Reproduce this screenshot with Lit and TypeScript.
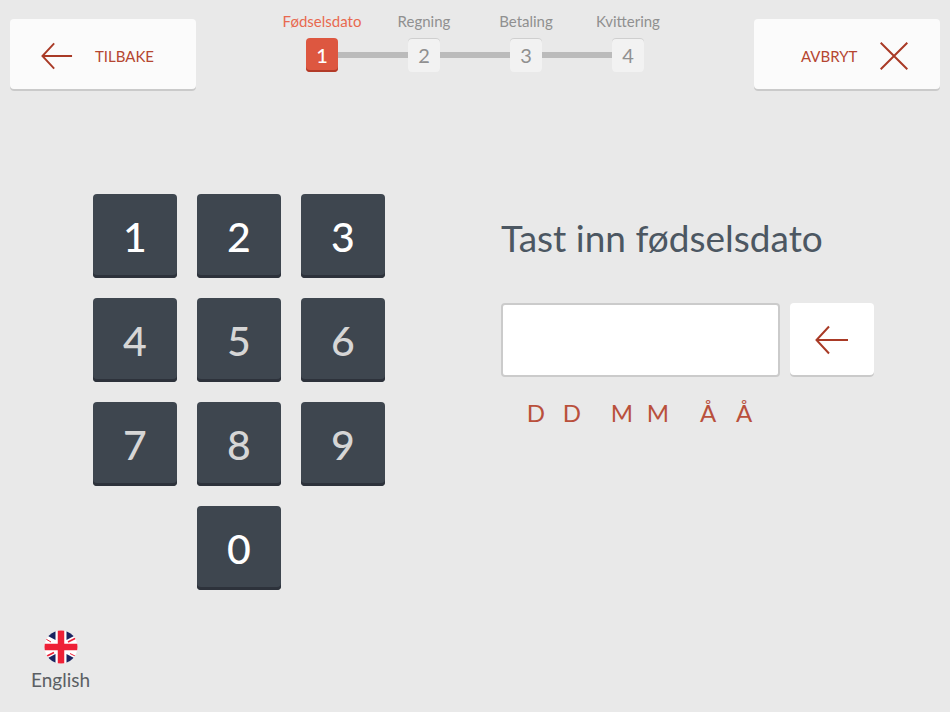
import { LitElement, html, svg, css } from "lit";
import { customElement, state } from "lit/decorators.js";
import { classMap } from "lit/directives/class-map.js";

const arrow = (size: number) => html`
  <svg class="icon" width=${size} height=${size} viewBox="0 0 34 34" aria-hidden="true">
    <path d="M33 17H1.500M14 3.500L1.500 17L14 30.500" />
  </svg>`;

const cross = html`
  <svg class="icon" width="28" height="28" viewBox="0 0 28 28" aria-hidden="true">
    <path d="M.7 .7L27.300 27.300M27.300 .7L.7 27.300" />
  </svg>`;

const flag = svg`
  <svg class="flag" width="34" height="34" viewBox="0 0 34 34" aria-hidden="true">
    <defs><clipPath id="disc"><circle cx="17" cy="17" r="16.500" /></clipPath></defs>
    <g clip-path="url(#disc)">
      <rect width="34" height="34" fill="#fff" />
      <g fill="#1b2460">
        <path d="M11.500 0V10L3 5.500V0Z" />
        <path d="M22.500 0V10L31 5.500V0Z" />
        <path d="M11.500 34V24L3 28.500V34Z" />
        <path d="M22.500 34V24L31 28.500V34Z" />
      </g>
      <path d="M24 12L33 7.500M10 22.500L1 27" stroke="#ee2137" stroke-width="1.800" />
      <path d="M1 8.500L7 12M26 23.500L32 26.500" stroke="#ee2137" stroke-width="1" />
      <path d="M17 0V34M0 17H34" stroke="#ee2137" stroke-width="6.500" />
    </g>
  </svg>`;

@customElement("app-root")
export class AppRoot extends LitElement {
  static styles = css`
    :host {
      display: flex;
      flex-direction: column;
      min-height: 100vh;
      box-sizing: border-box;
      background: #e9e9e9;
      color: #4c5762;
      font-family: Lato, "Liberation Sans", sans-serif;
    }
    button {
      margin: 0;
      padding: 0;
      border: 0;
      font: inherit;
      cursor: pointer;
    }
    .icon {
      fill: none;
      stroke: #a93a26;
      stroke-width: 2;
    }
    header {
      display: flex;
      justify-content: space-between;
      align-items: flex-start;
      padding: 12px 10px 0;
    }
    .nav {
      display: flex;
      align-items: center;
      justify-content: space-between;
      box-sizing: border-box;
      width: 186px;
      height: 72px;
      margin-top: 7px;
      padding: 2px 42px 0 31px;
      border-radius: 4px;
      background: #fbfbfb;
      box-shadow: inset 0 -2px #cacaca;
      color: #b54631;
      font-size: 15px;
      line-height: 20px;
    }
    .nav.cancel {
      padding: 2px 32px 0 47px;
    }
    .steps {
      display: grid;
      grid-template-columns: repeat(4, 102px);
      margin: 0;
      padding: 0;
      list-style: none;
    }
    .step {
      display: grid;
      grid-template-columns: 1fr 32px 1fr;
      align-items: center;
      row-gap: 8px;
      color: #909090;
    }
    .label {
      grid-column: 1 / -1;
      text-align: center;
      font-size: 15px;
      line-height: 18px;
    }
    .line {
      height: 6px;
      background: #bbb;
    }
    .step:first-child .line:first-of-type,
    .step:last-child .line:last-of-type {
      background: none;
    }
    .box {
      height: 34px;
      border-radius: 4px;
      background: #f2f2f2;
      box-shadow: inset 0 1px #cfcfcf;
      text-align: center;
      font-size: 20px;
      line-height: 35px;
    }
    .step.current {
      color: #e8694f;
    }
    .current .box {
      background: #dd5740;
      box-shadow: inset 0 -2px #b23b28;
      color: #fff;
      font-weight: 500;
    }
    .step:first-child .line:first-of-type {
      visibility: hidden;
    }
    main {
      display: flex;
      justify-content: space-between;
      align-items: flex-start;
      padding: 103px 76px 0 93px;
    }
    .keypad {
      display: grid;
      grid-template-columns: repeat(3, 84px);
      gap: 20px;
    }
    .key {
      height: 84px;
      border-radius: 4px;
      background: #3e464f;
      box-shadow: inset 0 -3px #2d323b;
      color: #d6d6d6;
      font-size: 41px;
      font-weight: 500;
      line-height: 86px;
    }
    .key.bright {
      color: #fff;
    }
    .key.zero {
      grid-column: 2;
    }
    .entry {
      width: 373px;
    }
    .title {
      display: block;
      margin: 20px 0 41px;
      font-size: 37px;
      line-height: 48px;
      white-space: nowrap;
    }
    .row {
      display: flex;
      gap: 10px;
    }
    .date {
      flex: 1;
      min-width: 0;
      box-sizing: border-box;
      height: 74px;
      padding: 0 16px;
      border: 2px solid #cbcbcb;
      border-radius: 4px;
      background: #fff;
      color: #4c5762;
      font: inherit;
      font-size: 37px;
      outline: 0;
    }
    .erase {
      display: grid;
      place-items: center;
      width: 84px;
      height: 74px;
      border-radius: 4px;
      background: #fff;
      box-shadow: inset 0 -2px #cacaca;
    }
    .hint {
      display: flex;
      gap: 14px;
      margin: 20px 0 0;
      padding-left: 17px;
      color: #b9503c;
      font-size: 24px;
      line-height: 32px;
    }
    .pair {
      display: grid;
      grid-template-columns: 36px 36px;
      text-align: center;
    }
    footer {
      margin-top: auto;
      padding: 0 31px 20px;
    }
    .language {
      display: inline-flex;
      flex-direction: column;
      align-items: center;
      gap: 4px;
      background: none;
      color: #5b5f64;
      font-size: 19px;
      line-height: 24px;
    }
  `;

  @state() private value = "";

  private steps = ["Fødselsdato", "Regning", "Betaling", "Kvittering"];
  private keys = [1, 2, 3, 4, 5, 6, 7, 8, 9, 0];

  private press(key: number) {
    if (this.value.length < 6) this.value += key;
  }

  render() {
    return html`
      <header>
        <button class="nav">${arrow(32)}<span>TILBAKE</span></button>
        <ol class="steps">
          ${this.steps.map(
            (name, i) => html`
              <li class=${classMap({ step: true, current: i === 0 })}>
                <div class="label">${name}</div>
                <span class="line"></span>
                <div class="box">${i + 1}</div>
                <span class="line"></span>
              </li>`
          )}
        </ol>
        <button class="nav cancel"><span>AVBRYT</span>${cross}</button>
      </header>
      <main>
        <div class="keypad">
          ${this.keys.map(
            (key) => html`
              <button
                class=${classMap({ key: true, bright: key < 4, zero: key === 0 })}
                @click=${() => this.press(key)}
              >${key}</button>`
          )}
        </div>
        <section class="entry">
          <label class="title" for="date">Tast inn fødselsdato</label>
          <div class="row">
            <input
              class="date"
              id="date"
              inputmode="numeric"
              maxlength="6"
              .value=${this.value}
              @input=${(e: Event) => (this.value = (e.target as HTMLInputElement).value)}
            />
            <button
              class="erase"
              aria-label="Slett"
              @click=${() => (this.value = this.value.slice(0, -1))}
            >${arrow(34)}</button>
          </div>
          <div class="hint">
            ${["DD", "MM", "ÅÅ"].map(
              (pair) => html`<div class="pair">${[...pair].map((c) => html`<span>${c}</span>`)}</div>`
            )}
          </div>
        </section>
      </main>
      <footer>
        <button class="language">${flag}<span>English</span></button>
      </footer>
    `;
  }
}
